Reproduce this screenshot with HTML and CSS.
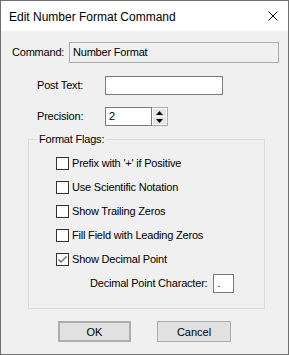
FILE: index.html
```html
<!DOCTYPE html>
<html lang="en">
<head>
  <meta charset="UTF-8" />
  <title>Edit Number Format Command</title>
  <link rel="stylesheet" href="styles.css">
</head>
<body>

  <div class="dialog">
    <div class="titlebar">
      <span class="title">Edit Number Format Command</span>
      <svg class="close" width="10" height="10" viewBox="0 0 10 10">
        <path d="M0.5 0.5 L9.5 9.5 M9.5 0.5 L0.5 9.5" stroke="#000" stroke-width="1" fill="none"/>
      </svg>
    </div>

    <div class="content">
      <div class="row row-command">
        <span class="label label-command">Command:</span>
        <div class="field field-readonly">Number Format</div>
      </div>

      <div class="row row-post">
        <span class="label label-wide">Post Text:</span>
        <div class="field field-post"></div>
      </div>

      <div class="row row-precision">
        <span class="label label-wide">Precision:</span>
        <div class="field field-precision">2</div>
        <div class="spin">
          <span class="spin-btn"><svg width="7" height="4" viewBox="0 0 7 4"><path d="M3.5 0 L7 4 L0 4 Z" fill="#000"/></svg></span>
          <span class="spin-btn"><svg width="7" height="4" viewBox="0 0 7 4"><path d="M0 0 L7 0 L3.5 4 Z" fill="#000"/></svg></span>
        </div>
      </div>

      <fieldset class="group">
        <legend>Format Flags:</legend>
        <div class="checks">
          <label class="check"><span class="box"></span>Prefix with '+' if Positive</label>
          <label class="check"><span class="box"></span>Use Scientific Notation</label>
          <label class="check"><span class="box"></span>Show Trailing Zeros</label>
          <label class="check"><span class="box"></span>Fill Field with Leading Zeros</label>
          <label class="check"><span class="box box-checked"><svg width="11" height="11" viewBox="0 0 11 11"><path d="M1.5 5.5 L4 8 L9.5 2.5" stroke="#6a6a6a" stroke-width="1.4" fill="none"/></svg></span>Show Decimal Point</label>
        </div>
        <div class="row row-decimal">
          <span class="label">Decimal Point Character:</span>
          <div class="field field-char">.</div>
        </div>
      </fieldset>

      <div class="buttons">
        <button class="btn btn-default">OK</button>
        <button class="btn">Cancel</button>
      </div>
    </div>
  </div>

</body>
</html>
```

FILE: styles.css
```css
* { margin:0; padding:0; box-sizing:border-box; }
body { background:#f0f0f0; font-family:'Liberation Sans', Arial, sans-serif; font-size:11px; letter-spacing:-0.2px; color:#000; }

.dialog { width:289px; height:355px; border:1px solid #707070; background:#f0f0f0; display:flex; flex-direction:column; }

/* Title bar */
.titlebar { height:30px; background:#fff; display:flex; align-items:center; justify-content:space-between; padding:0 10px 0 8px; }
.title { font-size:12px; letter-spacing:0; padding-top:1px; }
.close { display:block; }

.content { flex:1; padding:11px 0 0 0; }

.row { display:flex; align-items:center; }
.label { line-height:13px; }
.field { background:#fff; border:1px solid #7a7a7a; height:19px; line-height:17px; padding-left:3px; }

.row-command { padding-left:11px; height:21px; }
.label-command { width:57px; }
.field-readonly { width:210px; height:21px; line-height:19px; background:#f0f0f0; border-color:#adadad; }

.row-post { padding-left:36px; margin-top:13px; }
.label-wide { width:68px; }
.field-post { width:118px; }

.row-precision { padding-left:36px; margin-top:12px; }
.field-precision { width:47px; }
.spin { width:16px; height:19px; display:flex; flex-direction:column; border:1px solid #acacac; border-left:none; background:#fff; padding:1px; gap:1px; }
.spin-btn { flex:1; background:#e5e5e5; display:flex; align-items:center; justify-content:center; }
.spin-btn svg { display:block; }

/* Group box */
.group { margin:7px 0 0 27px; width:237px; border:1px solid #dcdcdc; padding:0 0 15px 27px; }
.group legend { margin-left:-19px; padding:0 2px; line-height:13px; }

.checks { display:flex; flex-direction:column; gap:11px; margin-top:11px; }
.check { display:flex; align-items:center; gap:3px; height:13px; line-height:13px; }
.box { width:13px; height:13px; border:1px solid #333; background:#fff; display:flex; align-items:center; justify-content:center; }
.box-checked svg { display:block; }

.row-decimal { margin:8px 0 0 34px; gap:6px; }
.field-char { width:21px; }

/* Buttons */
.buttons { display:flex; gap:26px; margin:12px 0 0 57px; }
.btn { font-family:inherit; font-size:11px; letter-spacing:0; width:74px; height:21px; background:#e1e1e1; border:1px solid #adadad; color:#000; }
.btn-default { width:73px; border-width:2px; }
```
